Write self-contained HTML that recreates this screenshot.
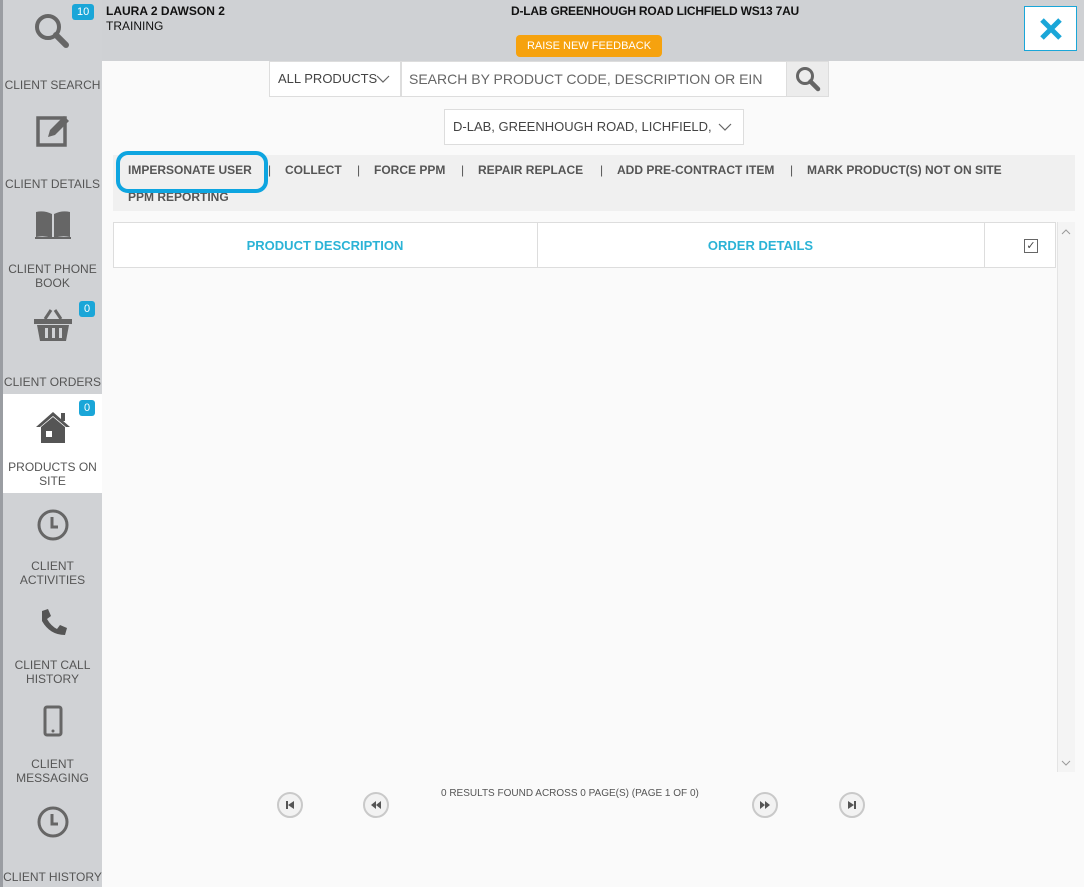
<!DOCTYPE html>
<html><head><meta charset="utf-8"><style>
*{margin:0;padding:0;box-sizing:border-box}
body{width:1084px;height:887px;position:relative;overflow:hidden;background:#fafafa;font-family:"Liberation Sans",Arial,sans-serif;color:#444}
.abs{position:absolute;white-space:nowrap}
#side{left:0;top:0;width:102px;height:887px;background:#d0d2d5;border-left:3px solid #9a9da2}
.item{position:absolute;left:3px;width:99px;text-align:center;font-size:12px;color:#555;line-height:14px}
.item svg{position:absolute;left:50%;transform:translateX(-50%)}
.badge{position:absolute;background:#1aa6d8;color:#fff;font-size:11px;border-radius:3px;padding:1px 5px;line-height:14px}
#hdr{left:102px;top:0;width:982px;height:61px;background:#cfd1d4}
.sel{border:1px solid #ddd;background:#fff;font-size:14px;color:#444;overflow:hidden}
.chev{position:absolute;top:12px}
.act{position:absolute;top:163px;font-size:12px;font-weight:bold;color:#555;white-space:nowrap}
.pg{width:26px;height:26px;border-radius:50%;border:2px solid #c9c9c9;background:#f2f2f2;display:flex;align-items:center;justify-content:center}
</style></head><body>
<div id="side" class="abs"></div>
<div class="item" style="top:0;height:99px"><svg width="40" height="40" viewBox="0 0 40 40" style="top:12px"><circle cx="15" cy="15" r="11" fill="none" stroke="#666" stroke-width="4"/><line x1="23" y1="23" x2="33" y2="33" stroke="#666" stroke-width="6" stroke-linecap="round"/></svg><div style="position:absolute;top:78px;width:100%">CLIENT SEARCH</div></div>
<div class="badge" style="left:72px;top:4px">10</div>
<div class="item" style="top:99px;height:99px"><svg width="36" height="36" viewBox="0 0 36 36" style="top:14px"><rect x="3" y="5" width="27" height="27" fill="none" stroke="#666" stroke-width="3.5"/><path d="M13 24 L15 17 L29 3 L34 8 L20 22 Z" fill="#666"/></svg><div style="position:absolute;top:78px;width:100%">CLIENT DETAILS</div></div>
<div class="item" style="top:198px;height:99px"><svg width="38" height="32" viewBox="0 0 38 32" style="top:12px"><path d="M2 2 Q10 0 18 4 L18 28 Q10 25 2 27 Z M20 4 Q28 0 36 2 L36 27 Q28 25 20 28 Z" fill="#666"/><path d="M1 28 L37 28" stroke="#666" stroke-width="2"/></svg><div style="position:absolute;top:64px;width:100%">CLIENT PHONE<br>BOOK</div></div>
<div class="item" style="top:297px;height:97px"><svg width="40" height="36" viewBox="0 0 40 36" style="top:10px"><path d="M12 12 L18 3 M28 12 L22 3" stroke="#666" stroke-width="3"/><rect x="1" y="12" width="38" height="5" fill="#666"/><path d="M4 18 L36 18 L33 34 L7 34 Z" fill="#666"/><rect x="12" y="21" width="3" height="10" fill="#d0d2d5"/><rect x="19" y="21" width="3" height="10" fill="#d0d2d5"/><rect x="26" y="21" width="3" height="10" fill="#d0d2d5"/></svg><div style="position:absolute;top:78px;width:100%">CLIENT ORDERS</div></div>
<div class="badge" style="left:79px;top:301px">0</div>
<div class="item" style="top:394px;height:99px;background:#fff"><svg width="36" height="34" viewBox="0 0 36 34" style="top:16px"><path d="M18 2 L35 17 L31 17 L18 6 L5 17 L1 17 Z" fill="#555"/><path d="M6 17 L18 7 L30 17 L30 33 L6 33 Z" fill="#555"/><rect x="11" y="21" width="6" height="6" fill="#fff"/><rect x="26" y="3" width="4" height="8" fill="#555"/></svg><div style="position:absolute;top:66px;width:100%">PRODUCTS ON<br>SITE</div></div>
<div class="badge" style="left:79px;top:400px">0</div>
<div class="item" style="top:493px;height:99px"><svg width="34" height="34" viewBox="0 0 34 34" style="top:15px"><circle cx="17" cy="17" r="14" fill="none" stroke="#666" stroke-width="3"/><path d="M16 9 L16 19 L22 19" fill="none" stroke="#666" stroke-width="3"/></svg><div style="position:absolute;top:66px;width:100%">CLIENT<br>ACTIVITIES</div></div>
<div class="item" style="top:592px;height:99px"><svg width="30" height="30" viewBox="0 0 30 30" style="top:15px"><path d="M4 4 L10 2 L13 9 L9 12 Q13 19 19 22 L22 18 L29 21 L27 28 Q12 28 4 14 Z" fill="#555"/></svg><div style="position:absolute;top:66px;width:100%">CLIENT CALL<br>HISTORY</div></div>
<div class="item" style="top:691px;height:99px"><svg width="20" height="32" viewBox="0 0 20 32" style="top:14px"><rect x="2" y="2" width="16" height="28" rx="2" fill="none" stroke="#666" stroke-width="3"/><circle cx="10" cy="26" r="1.5" fill="#666"/></svg><div style="position:absolute;top:66px;width:100%">CLIENT<br>MESSAGING</div></div>
<div class="item" style="top:790px;height:97px"><svg width="34" height="34" viewBox="0 0 34 34" style="top:15px"><circle cx="17" cy="17" r="14" fill="none" stroke="#666" stroke-width="3"/><path d="M16 9 L16 19 L22 19" fill="none" stroke="#666" stroke-width="3"/></svg><div style="position:absolute;top:80px;width:100%">CLIENT HISTORY</div></div>

<div id="hdr" class="abs"></div>
<div class="abs" style="left:106px;top:4px;font-size:12px;line-height:15px;color:#111"><b>LAURA 2 DAWSON 2</b><br>TRAINING</div>
<div class="abs" style="left:511px;top:4px;font-size:12px;font-weight:bold;color:#111;letter-spacing:-0.2px">D-LAB GREENHOUGH ROAD LICHFIELD WS13 7AU</div>
<div class="abs" style="left:516px;top:35px;width:146px;height:22px;background:#f6a20e;border-radius:4px;color:#fff;font-size:11px;text-align:center;line-height:22px">RAISE NEW FEEDBACK</div>
<div class="abs" style="left:1024px;top:6px;width:53px;height:45px;background:#fff;border:1px solid #1aa6d8;display:flex;align-items:center;justify-content:center"><svg width="24" height="24" viewBox="0 0 24 24"><path d="M3 3 L21 21 M21 3 L3 21" stroke="#1aa6d8" stroke-width="5"/></svg></div>

<div class="abs sel" style="left:269px;top:61px;width:132px;height:36px;line-height:34px;padding-left:8px;font-size:13px">ALL PRODUCTS<svg class="chev" style="left:106px" width="14" height="10"><path d="M1 2 L7 8 L13 2" fill="none" stroke="#666" stroke-width="1.2"/></svg></div>
<div class="abs sel" style="left:401px;top:61px;width:386px;height:36px;line-height:34px;padding-left:7px;color:#666">SEARCH BY PRODUCT CODE, DESCRIPTION OR EIN</div>
<div class="abs" style="left:786px;top:61px;width:43px;height:36px;background:#ececec;border:1px solid #ddd;display:flex;align-items:center;justify-content:center"><svg width="26" height="26" viewBox="0 0 26 26"><circle cx="10" cy="10" r="7.5" fill="none" stroke="#666" stroke-width="3"/><line x1="15.5" y1="15.5" x2="23" y2="23" stroke="#666" stroke-width="4.5" stroke-linecap="round"/></svg></div>
<div class="abs sel" style="left:444px;top:109px;width:300px;height:36px;line-height:34px;padding-left:8px;font-size:13px"><span style="display:inline-block;width:262px;overflow:hidden;vertical-align:top">D-LAB, GREENHOUGH ROAD, LICHFIELD, WS13 7AU</span><svg class="chev" style="left:273px" width="14" height="10"><path d="M1 2 L7 8 L13 2" fill="none" stroke="#666" stroke-width="1.2"/></svg></div>

<div class="abs" style="left:113px;top:155px;width:962px;height:56px;background:#f0f0f0"></div>
<div class="act" style="left:128px">IMPERSONATE USER</div>
<div class="act" style="left:268px;font-weight:normal">|</div>
<div class="act" style="left:285px">COLLECT</div>
<div class="act" style="left:357px;font-weight:normal">|</div>
<div class="act" style="left:374px">FORCE PPM</div>
<div class="act" style="left:461px;font-weight:normal">|</div>
<div class="act" style="left:478px">REPAIR REPLACE</div>
<div class="act" style="left:600px;font-weight:normal">|</div>
<div class="act" style="left:617px">ADD PRE-CONTRACT ITEM</div>
<div class="act" style="left:790px;font-weight:normal">|</div>
<div class="act" style="left:807px">MARK PRODUCT(S) NOT ON SITE</div>
<div class="act" style="left:128px;top:190px">PPM REPORTING</div>
<div class="abs" style="left:116px;top:151px;width:152px;height:42px;border:4px solid #0ea5e0;border-radius:12px"></div>

<div class="abs" style="left:113px;top:222px;width:943px;height:46px;background:#fff;border:1px solid #ddd"></div>
<div class="abs" style="left:537px;top:222px;width:1px;height:46px;background:#ddd"></div>
<div class="abs" style="left:984px;top:222px;width:1px;height:46px;background:#ddd"></div>
<div class="abs" style="left:113px;top:238px;width:424px;text-align:center;font-size:13px;font-weight:bold;color:#2bb3d6">PRODUCT DESCRIPTION</div>
<div class="abs" style="left:537px;top:238px;width:447px;text-align:center;font-size:13px;font-weight:bold;color:#2bb3d6">ORDER DETAILS</div>
<div class="abs" style="left:1024px;top:239px;width:14px;height:14px;border:1px solid #666;font-size:11px;line-height:12px;text-align:center;color:#444">✓</div>
<div class="abs" style="left:1057px;top:222px;width:18px;height:550px;background:#f4f4f4;border-left:1px solid #e4e4e4"></div>
<svg class="abs" style="left:1061px;top:228px" width="10" height="8"><path d="M1 6 L5 2 L9 6" fill="none" stroke="#999"/></svg>
<svg class="abs" style="left:1061px;top:759px" width="10" height="8"><path d="M1 2 L5 6 L9 2" fill="none" stroke="#999"/></svg>

<div class="abs" style="left:441px;top:788px;font-size:10px;color:#555">0 RESULTS FOUND ACROSS 0 PAGE(S) (PAGE 1 OF 0)</div>
<div class="abs pg" style="left:277px;top:792px"><svg width="12" height="12"><rect x="2" y="2" width="2" height="8" fill="#555"/><path d="M10 2 L4 6 L10 10Z" fill="#555"/></svg></div>
<div class="abs pg" style="left:363px;top:792px"><svg width="12" height="12"><path d="M6 2 L1 6 L6 10Z M11 2 L6 6 L11 10Z" fill="#555"/></svg></div>
<div class="abs pg" style="left:752px;top:792px"><svg width="12" height="12"><path d="M1 2 L6 6 L1 10Z M6 2 L11 6 L6 10Z" fill="#555"/></svg></div>
<div class="abs pg" style="left:839px;top:792px"><svg width="12" height="12"><path d="M2 2 L8 6 L2 10Z" fill="#555"/><rect x="8" y="2" width="2" height="8" fill="#555"/></svg></div>
</body></html>
